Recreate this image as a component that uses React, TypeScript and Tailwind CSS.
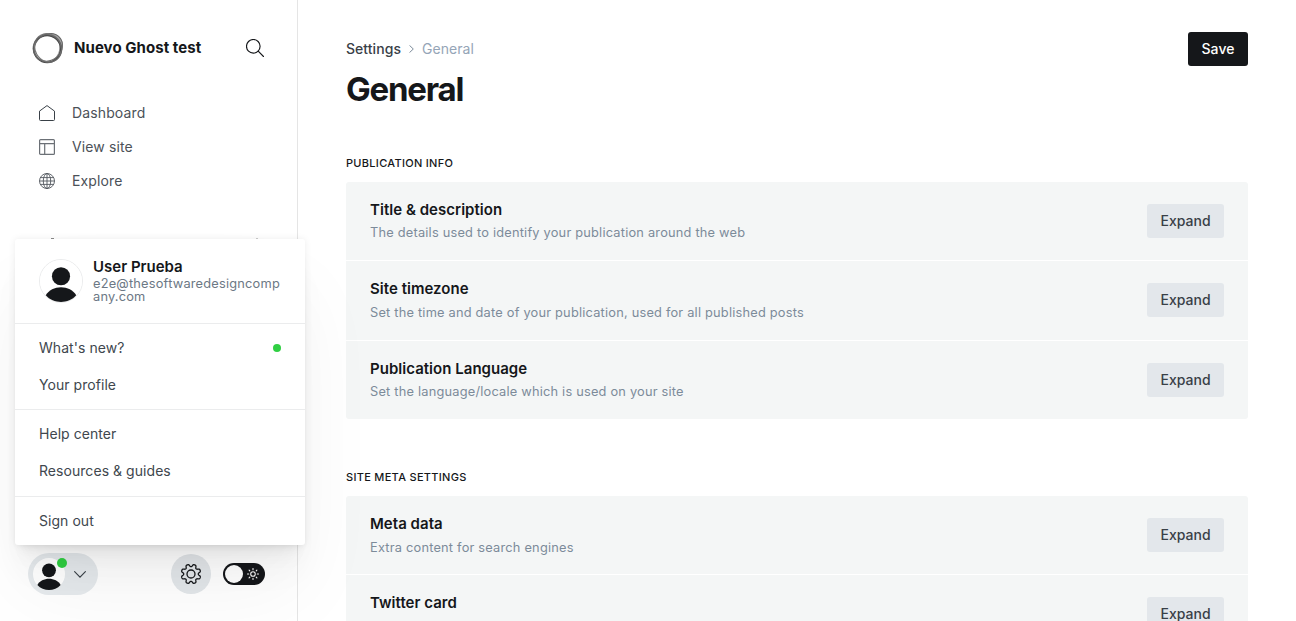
import React from 'react';

type Row = { title: string; description: string };

const publicationInfo: Row[] = [
  { title: 'Title & description', description: 'The details used to identify your publication around the web' },
  { title: 'Site timezone', description: 'Set the time and date of your publication, used for all published posts' },
  { title: 'Publication Language', description: 'Set the language/locale which is used on your site' },
];

const siteMeta: Row[] = [
  { title: 'Meta data', description: 'Extra content for search engines' },
  { title: 'Twitter card', description: '' },
];

function Logo() {
  return (
    <svg className="size-8 shrink-0" viewBox="0 0 32 32" fill="none">
      <path d="M10 3C16-.5 26 .5 30 9c2.500 7-1 15-8 18.500 4-4.500 6-9 5.200-15C24.500 6 17.500 3.500 10 3z" fill="#a3a3a3" />
      <circle cx="15.2" cy="16.800" r="13.500" stroke="#444" strokeWidth="1.7" />
      <ellipse cx="16.400" cy="15.4" rx="15" ry="12.800" transform="rotate(-42 16.400 15.4)" stroke="#666" strokeWidth="1" />
      <ellipse cx="16" cy="15.800" rx="14.600" ry="13" transform="rotate(60 16 15.800)" stroke="#777" strokeWidth="1.2" />
      <ellipse cx="15.500" cy="16.6" rx="14.400" ry="13.600" transform="rotate(20 15.500 16.6)" stroke="#666" strokeWidth="1" />
    </svg>
  );
}

function SearchIcon() {
  return (
    <svg className="size-[18px]" viewBox="0 0 18 18" fill="none" stroke="#15171a" strokeWidth="1.15" strokeLinecap="round">
      <circle cx="7.300" cy="7.300" r="6.800" />
      <path d="M12.200 12.200 17.500 17.500" />
    </svg>
  );
}

function HomeIcon() {
  return (
    <svg className="size-4" viewBox="0 0 16 16" fill="none" stroke="#394047" strokeLinejoin="round">
      <path d="M.5 6.100 8 .6l7.500 5.500v8.400a1 1 0 0 1-1 1h-13a1 1 0 0 1-1-1z" />
    </svg>
  );
}

function LayoutIcon() {
  return (
    <svg className="size-4" viewBox="0 0 16 16" fill="none" stroke="#6b7076" strokeWidth="1.200">
      <rect x=".6" y=".6" width="14.800" height="14.800" rx="1" />
      <path d="M.5 4.700h15M5.700 4.700v11" />
    </svg>
  );
}

function GlobeIcon() {
  return (
    <svg className="size-4" viewBox="0 0 16 16" fill="none" stroke="#51575e" strokeWidth=".9">
      <circle cx="8" cy="8" r="7.500" />
      <ellipse cx="8" cy="8" rx="3.700" ry="7.500" />
      <path d="M8 .5v15M.5 8h15M1.400 4.600h13.200M1.400 11.400h13.200" />
    </svg>
  );
}

function Avatar({ className }: { className: string }) {
  return (
    <svg className={className} viewBox="0 0 44 44">
      <circle cx="22" cy="22" r="22" fill="#fff" />
      <circle cx="22" cy="17" r="9.500" fill="#15171a" />
      <path d="M6 37C9 31.500 15.500 28.500 22 28.500s13 3 16 8.500C34 41.700 28 44 22 44S10 41.700 6 37z" fill="#15171a" />
    </svg>
  );
}

function gearPath() {
  const points: string[] = [];
  for (let i = 0; i < 160; i++) {
    const a = (i / 160) * Math.PI * 2;
    const r = 8.5 - 1.4 * Math.tanh(1.6 * Math.cos(8 * a) - 0.3);
    points.push(`${(11 + r * Math.cos(a)).toFixed(2)} ${(11 + r * Math.sin(a)).toFixed(2)}`);
  }
  return `M${points.join('L')}Z`;
}

function GearIcon() {
  return (
    <svg className="size-[22px]" viewBox="0 0 22 22" fill="none" stroke="#15171a" strokeWidth="1.300" strokeLinejoin="round">
      <path d={gearPath()} />
      <circle cx="11" cy="11" r="4" />
    </svg>
  );
}

function SunIcon() {
  return (
    <svg className="size-3" viewBox="0 0 12 12" fill="none" stroke="#fff" strokeLinecap="round">
      <circle cx="6" cy="6" r="2.300" strokeWidth="1.100" />
      <path
        strokeWidth="1.100"
        d="M6 .5v1.200M6 10.300v1.200M.5 6h1.200M10.300 6h1.200M2.100 2.100l.7.7M9.200 9.200l.7.7M2.100 9.900l.7-.7M9.200 2.800l.7-.7"
      />
    </svg>
  );
}

function NavItem({ icon, label }: { icon: React.ReactNode; label: string }) {
  return (
    <div className="flex h-[34px] items-center gap-[17px] pl-[39px] text-[14px] tracking-[0.13px] text-[#4b5158]">
      {icon}
      <span className="pb-[2px]">{label}</span>
    </div>
  );
}

function Sidebar() {
  return (
    <aside className="flex h-full w-[298px] shrink-0 flex-col border-r border-[#e5e5e5] bg-white">
      <div className="flex h-24 items-center pr-[33px] pl-8">
        <Logo />
        <span className="ml-[10px] flex-1 text-[15px] font-bold tracking-[0.06px] text-[#15171a]">Nuevo Ghost test</span>
        <SearchIcon />
      </div>
      <nav>
        <NavItem icon={<HomeIcon />} label="Dashboard" />
        <NavItem icon={<LayoutIcon />} label="View site" />
        <NavItem icon={<GlobeIcon />} label="Explore" />
      </nav>
      <div className="mt-10 flex justify-between pr-[39px] pl-[51px]">
        <span className="h-2 w-[3px] bg-[#8a8a8a]" />
        <span className="h-2 w-[2px] bg-[#ccc]" />
      </div>
      <div className="mt-auto mb-[26px] flex h-[42px] items-center pl-7">
        <div className="relative flex h-[42px] w-[70px] items-center rounded-full bg-[#e6eaed] pl-[5px]">
          <Avatar className="size-8" />
          <svg className="ml-[9px] h-[7px] w-3" viewBox="0 0 12 7" fill="none" stroke="#394047" strokeWidth="1.100" strokeLinecap="round">
            <path d="M.6.7 6 6.200 11.400.7" />
          </svg>
          <span className="absolute top-[5px] left-[29px] size-[10px] rounded-full bg-[#30cf43]" />
        </div>
        <div className="ml-[73px] flex size-10 items-center justify-center rounded-full bg-[#e3e7ea]">
          <GearIcon />
        </div>
        <div className="ml-3 flex h-[22px] w-[42px] items-center justify-between rounded-full bg-[#15171a] pr-[6px] pl-[2px]">
          <span className="size-[18px] rounded-full bg-white" />
          <SunIcon />
        </div>
      </div>
    </aside>
  );
}

function MenuItem({ label, dot }: { label: string; dot?: boolean }) {
  return (
    <div className="flex h-[37px] items-center justify-between px-6">
      <span>{label}</span>
      {dot && <span className="size-2 rounded-full bg-[#30cf43]" />}
    </div>
  );
}

function UserMenu() {
  return (
    <div className="absolute top-[239px] left-[15px] h-[306px] w-[290px] rounded-[3px] bg-white text-[14px] tracking-[0.05px] text-[#40474e] shadow-[0_0_7px_rgba(0,0,0,0.08),0_5.1px_5.3px_-5px_rgba(0,0,0,0.03),0_9.5px_10px_-5px_rgba(0,0,0,0.035),0_17px_17.9px_-5px_rgba(0,0,0,0.035),0_31.8px_33.4px_-5px_rgba(0,0,0,0.03),0_50px_80px_-5px_rgba(0,0,0,0.05)]">
      <div className="flex h-[85px] border-b border-[#ebeced] pt-5 pl-6">
        <div className="size-11 shrink-0 rounded-full border border-[#ebeced]">
          <Avatar className="size-[42px]" />
        </div>
        <div className="ml-[10px]">
          <div className="text-[15px] leading-4 font-semibold tracking-normal text-[#15171a]">User Prueba</div>
          <div className="mt-[2px] w-[190px] text-[12.800px] leading-[13px] tracking-[0.210px] text-[#6c7885]">
            e2e@thesoftwaredesigncomp
            <br />
            any.com
          </div>
        </div>
      </div>
      <div className="h-[86px] border-b border-[#ebeced] pt-[5px]">
        <MenuItem label="What's new?" dot />
        <MenuItem label="Your profile" />
      </div>
      <div className="h-[87px] border-b border-[#ebeced] pt-[5px]">
        <MenuItem label="Help center" />
        <MenuItem label="Resources & guides" />
      </div>
      <div className="pt-[5px]">
        <MenuItem label="Sign out" />
      </div>
    </div>
  );
}

function SettingsGroup({ heading, rows }: { heading: string; rows: Row[] }) {
  return (
    <section>
      <h2 className="h-[26px] text-[11px] leading-[14px] font-medium tracking-[0.300px] text-[#15171a] uppercase">{heading}</h2>
      <div className="overflow-hidden rounded-[3px] bg-[#f4f6f6]">
        {rows.map((row) => (
          <div key={row.title} className="flex h-[79.300px] items-start justify-between border-b border-white px-6 last:h-[78px] last:border-b-0">
            <div className="pt-[18px]">
              <div className="text-[15px] leading-[20px] font-semibold tracking-[0.03px] text-[#15171a]">{row.title}</div>
              <div className="mt-[3.450px] text-[12.800px] leading-[20px] tracking-[0.210px] text-[#7c8b9a]">{row.description}</div>
            </div>
            <button className="mt-[22px] h-[34px] w-[77px] rounded-[3px] bg-[#e3e7eb] pb-px text-[14px] font-medium tracking-[0.01px] text-[#394047]">
              Expand
            </button>
          </div>
        ))}
      </div>
    </section>
  );
}

export default function App() {
  return (
    <div className="relative flex h-[621px] w-[1296px] overflow-hidden bg-white font-['Inter',sans-serif]">
      <Sidebar />
      <main className="flex-1 overflow-hidden pr-12 pl-12">
        <header className="flex h-[156px] justify-between pt-8">
          <div>
            <div className="flex h-[34px] items-center pb-[2px] text-[14px] tracking-[0.050px]">
              <span className="font-medium text-[#394047]">Settings</span>
              <svg className="mx-2 mt-[2px] h-2 w-[5px]" viewBox="0 0 5 8" fill="none" stroke="#7c8b9a">
                <path d="m.5.4 3.800 3.600L.5 7.600" />
              </svg>
              <span className="text-[#95a5b7]">General</span>
            </div>
            <h1 className="mt-[3px] text-[33px] leading-[40px] font-bold tracking-[-1.2px] text-[#15171a]">General</h1>
          </div>
          <button className="h-[34px] w-[60px] rounded-[3px] bg-[#15171a] pb-[2px] text-[14px] font-medium tracking-[0.03px] text-white">Save</button>
        </header>
        <div className="flex flex-col gap-[51.550px]">
          <SettingsGroup heading="Publication info" rows={publicationInfo} />
          <SettingsGroup heading="Site meta settings" rows={siteMeta} />
        </div>
      </main>
      <UserMenu />
    </div>
  );
}
